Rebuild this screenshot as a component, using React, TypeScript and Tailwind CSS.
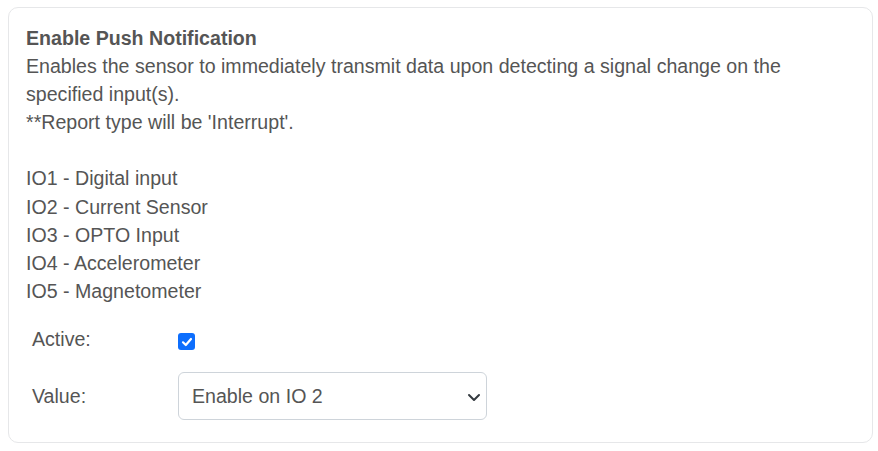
import React from "react";

export default function App() {
  return (
    <div className="w-[878px] h-[451px] bg-white pt-[7px] pl-[8px]" style={{ fontFamily: '"Liberation Sans", Arial, sans-serif' }}>
      <div className="w-[865px] h-[436px] border border-[#e6e7e9] rounded-[10px] pl-[17px] pr-[17px] pt-[16px] text-[#555555] text-[19.6px] leading-[28.1px]">
        <div className="font-bold">Enable Push Notification</div>
        <div>Enables the sensor to immediately transmit data upon detecting a signal change on the specified input(s).</div>
        <div>**Report type will be 'Interrupt'.</div>
        <div className="h-[28.1px]"></div>
        <div>IO1 - Digital input</div>
        <div>IO2 - Current Sensor</div>
        <div>IO3 - OPTO Input</div>
        <div>IO4 - Accelerometer</div>
        <div>IO5 - Magnetometer</div>
        <div className="flex items-center h-[28px] mt-[22px] pl-[6px]">
          <div className="w-[146px] -mt-[4px]">Active:</div>
          <div className="w-[17px] h-[17px] mt-[2px] rounded-[3px] bg-[#0d6efd] flex items-center justify-center">
            <svg width="12" height="12" viewBox="0 0 12 12" fill="none">
              <path d="M2 6.3 L4.8 9 L10 3" stroke="white" strokeWidth="2.2" strokeLinecap="round" strokeLinejoin="round" />
            </svg>
          </div>
        </div>
        <div className="flex items-center mt-[17px] pl-[6px]">
          <div className="w-[146px]">Value:</div>
          <div className="w-[309px] h-[48px] border border-[#ced4da] rounded-[6px] flex items-center justify-between pl-[13px] pr-[5px]">
            <span>Enable on IO 2</span>
            <svg width="14" height="10" viewBox="0 0 14 10" fill="none" className="mt-[2px]">
              <path d="M2 3 L7 8 L12 3" stroke="#343a40" strokeWidth="2" strokeLinecap="round" strokeLinejoin="round" />
            </svg>
          </div>
        </div>
      </div>
    </div>
  );
}
